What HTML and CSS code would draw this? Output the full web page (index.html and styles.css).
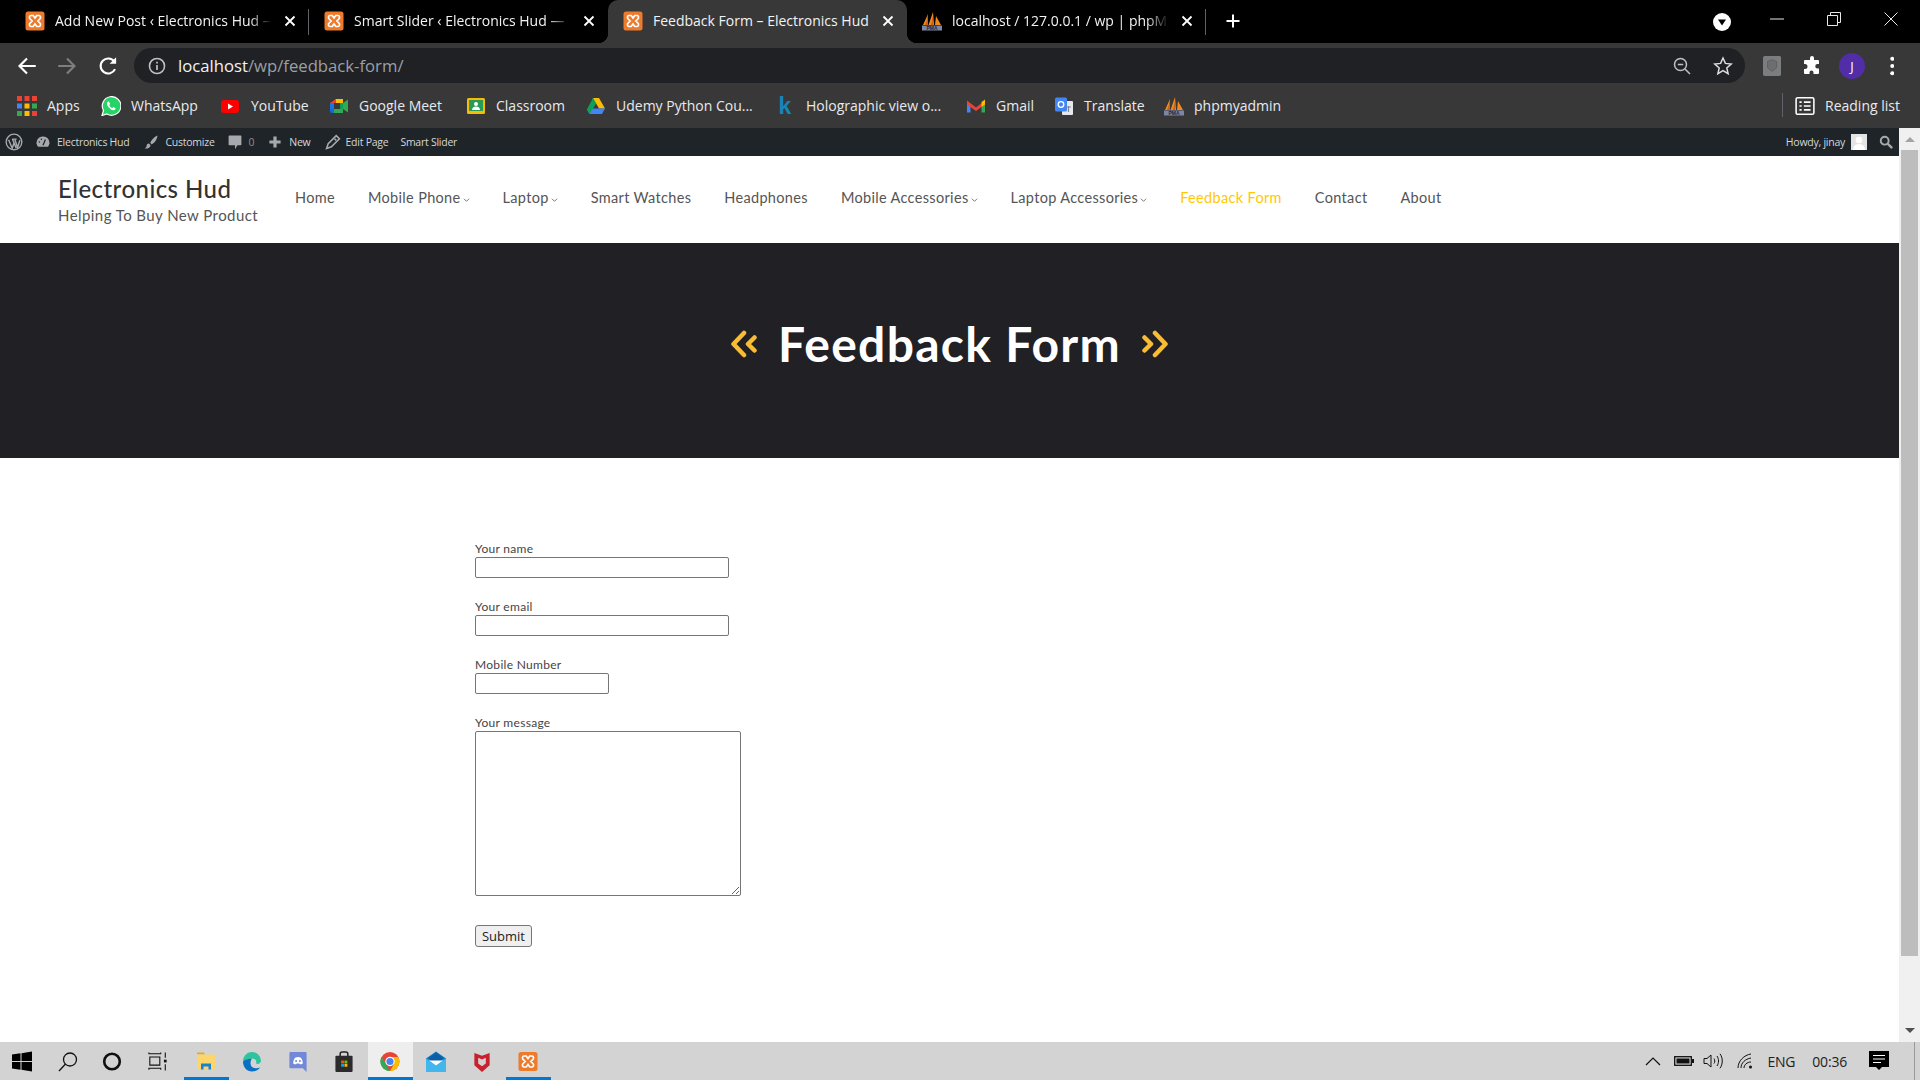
FILE: index.html
```html
<!DOCTYPE html>
<html lang="en">
<head>
  <meta charset="UTF-8">
  <title>Feedback Form – Electronics Hud</title>
  <link rel="stylesheet" href="styles.css">
</head>
<body>
  <svg class="defs" width="0" height="0">
    <symbol id="xampp" viewBox="0 0 20 20">
      <rect x="0.5" y="0.5" width="19" height="19" rx="2.5" fill="#ee7a2c"/>
      <path d="M6 4.500h2.200l1.800 2.600 1.800-2.600H14c1.600 0 2.200 2.600.7 3.600L12.800 10l1.900 1.900c1.500 1 .9 3.600-.7 3.600h-2.200L10 12.900l-1.800 2.600H6c-1.600 0-2.200-2.600-.7-3.600L7.200 10 5.300 8.100C3.800 7.100 4.400 4.500 6 4.500z" fill="none" stroke="#fff" stroke-width="1.700"/>
    </symbol>
    <symbol id="pma" viewBox="0 0 20 20">
      <path d="M1 14 6 3l-1 11zM6.500 14 11 1l1 13zM13 14l1-9 5 9z" fill="#f08a1d"/>
      <path d="M3 14 6 6v8zM9 14l2-9v9z" fill="#c9611a"/>
      <rect x="0" y="14.500" width="20" height="5" fill="#7c86a8"/>
    </symbol>
    <symbol id="caret" viewBox="0 0 8 6">
      <path d="M1 1.500 4 4.500l3-3" fill="none" stroke="#555" stroke-width="0.900"/>
    </symbol>
  </svg>

  <header class="tabstrip">
    <div class="tab tab-sep">
      <svg class="tab-icon"><use href="#xampp"/></svg>
      <span class="tab-title">Add New Post ‹ Electronics Hud —</span>
      <svg class="tab-close" viewBox="0 0 12 12"><path d="M1.500 1.500l9 9m0-9l-9 9"/></svg>
    </div>
    <div class="tab">
      <svg class="tab-icon"><use href="#xampp"/></svg>
      <span class="tab-title">Smart Slider ‹ Electronics Hud —</span>
      <svg class="tab-close" viewBox="0 0 12 12"><path d="M1.500 1.500l9 9m0-9l-9 9"/></svg>
    </div>
    <div class="tab active">
      <svg class="tab-icon"><use href="#xampp"/></svg>
      <span class="tab-title">Feedback Form – Electronics Hud</span>
      <svg class="tab-close" viewBox="0 0 12 12"><path d="M1.500 1.500l9 9m0-9l-9 9"/></svg>
    </div>
    <div class="tab tab-sep">
      <svg class="tab-icon" viewBox="0 0 20 20"><use href="#pma" width="20" height="20"/><text class="pma-label" x="10" y="19">PMA</text></svg>
      <span class="tab-title">localhost / 127.0.0.1 / wp | phpMy</span>
      <svg class="tab-close" viewBox="0 0 12 12"><path d="M1.500 1.500l9 9m0-9l-9 9"/></svg>
    </div>
    <svg class="new-tab" viewBox="0 0 16 16"><path d="M8 1.500v13M1.500 8h13"/></svg>
    <svg class="tab-search" viewBox="0 0 18 18"><circle cx="9" cy="9" r="9" fill="#fff"/><path d="M5 6.500h8L9 12.500z" fill="#000"/></svg>
    <div class="win-btn"><svg viewBox="0 0 14 14"><path d="M0 7h14"/></svg></div>
    <div class="win-btn"><svg viewBox="0 0 14 14"><path d="M.5 3.500h10v10H.5zM3.500 3.500V.5h10v10h-3"/></svg></div>
    <div class="win-btn"><svg viewBox="0 0 14 14"><path d="M.5.5l13 13m0-13l-13 13"/></svg></div>
  </header>

  <div class="toolbar">
    <div class="tool-btn"><svg viewBox="0 0 16 16"><path d="M15 8H2M8 2 2 8l6 6" fill="none" stroke="#fff" stroke-width="1.700"/></svg></div>
    <div class="tool-btn"><svg viewBox="0 0 16 16"><path d="M1 8h13M8 2l6 6-6 6" fill="none" stroke="#7c7e80" stroke-width="1.700"/></svg></div>
    <div class="tool-btn tool-reload"><svg viewBox="0 0 16 16"><path d="M13.600 10.500A6 6 0 1 1 13 4.500" fill="none" stroke="#fff" stroke-width="1.700"/><path d="M14.500 1v5.200H9.300z" fill="#fff"/></svg></div>
    <div class="address">
      <svg class="addr-info" viewBox="0 0 16 16"><circle cx="8" cy="8" r="6.700" fill="none" stroke="#bdc1c6" stroke-width="1.400"/><path d="M8 7v4.500M8 4.300v1.400" stroke="#bdc1c6" stroke-width="1.500"/></svg>
      <span class="addr-text"><b>localhost</b>/wp/feedback-form/</span>
      <svg class="addr-zoom" viewBox="0 0 18 18"><circle cx="7.500" cy="7.500" r="6" fill="none" stroke="#bdc1c6" stroke-width="1.500"/><path d="M12 12l5 5M4.800 7.500h5.400" stroke="#bdc1c6" stroke-width="1.500"/></svg>
      <svg class="addr-star" viewBox="0 0 20 20"><path d="M10 2l2.400 5.400 5.800.6-4.400 3.900 1.300 5.800-5.100-3-5.100 3 1.300-5.800L1.800 8l5.800-.6z" fill="none" stroke="#dadce0" stroke-width="1.500"/></svg>
    </div>
    <div class="tool-btn"><svg viewBox="0 0 20 22"><rect width="20" height="22" rx="2" fill="#7b7d7e"/><path d="M5 6l5-2 5 2v7l-5 4-5-4z" fill="#6c6e6f" stroke="#5d5f60"/></svg></div>
    <div class="tool-btn"><svg viewBox="0 0 20 20"><path d="M8 2a2 2 0 0 1 4 0v2h4a1 1 0 0 1 1 1v3h-1.500a2.200 2.200 0 0 0 0 4.500H17V17a1 1 0 0 1-1 1h-4.500v-1.500a2 2 0 0 0-4 0V18H3a1 1 0 0 1-1-1v-4h1a2.500 2.500 0 0 0 0-5H2V5a1 1 0 0 1 1-1h5z" fill="#fff"/></svg></div>
    <div class="tool-btn"><span class="avatar">J</span></div>
    <div class="tool-btn"><svg viewBox="0 0 4 18"><circle cx="2" cy="2.500" r="1.800" fill="#fff"/><circle cx="2" cy="9" r="1.800" fill="#fff"/><circle cx="2" cy="15.500" r="1.800" fill="#fff"/></svg></div>
  </div>

  <nav class="bookmarks">
    <a class="bm bm-apps"><svg viewBox="0 0 16 16"><path fill="#ea4335" d="M0 0h4v4H0zM6 0h4v4H6zM12 0h4v4h-4z"/><path fill="#4285f4" d="M0 6h4v4H0z"/><path fill="#fbbc05" d="M6 6h4v4H6z"/><path fill="#34a853" d="M12 6h4v4h-4z"/><path fill="#34a853" d="M0 12h4v4H0z"/><path fill="#fbbc05" d="M6 12h4v4H6z"/><path fill="#ea4335" d="M12 12h4v4h-4z"/></svg>Apps</a>
    <a class="bm bm-wa"><svg viewBox="0 0 20 20"><path d="M1 19.500l1.500-5A9.300 9.300 0 1 1 6 18z" fill="#25d366" stroke="#fff" stroke-width="1.200"/><path d="M7 5.500c-1.500 1-1.500 3 .5 5.500s4.500 4 6 3c1-.6 1.200-1.400 1-1.800l-2.200-1.200-1 1.100c-1-.3-2.600-1.800-3.100-3.200l.9-1L7.900 5.500z" fill="#fff"/></svg>WhatsApp</a>
    <a class="bm bm-yt"><svg viewBox="0 0 20 20"><rect x="1" y="4" width="18" height="13" rx="3" fill="#f00"/><path d="M8 7.500l5 3-5 3z" fill="#fff"/></svg>YouTube</a>
    <a class="bm bm-meet"><svg viewBox="0 0 20 20"><path d="M7 3h7v4H5V5z" fill="#fbbc05"/><path d="M1 7h4v6H1z" fill="#1a73e8"/><path d="M1 13h4v4H3a2 2 0 0 1-2-2z" fill="#1967d2"/><path d="M5 13h9v4H5z" fill="#34a853"/><path d="M7 3v4H1z" fill="#ea4335"/><path d="M14 7v6l5 3.500v-13z" fill="#34a853"/><path d="M11 7h3v6h-3z" fill="#0f9d58"/></svg>Google Meet</a>
    <a class="bm bm-class"><svg viewBox="0 0 20 20"><rect x="1" y="2" width="18" height="16" rx="1.500" fill="#f9bc05"/><rect x="3" y="4" width="14" height="11" fill="#2a9a55"/><circle cx="10" cy="8" r="2" fill="#fff"/><path d="M6 14c0-2.500 2-3.500 4-3.500s4 1 4 3.500z" fill="#fff"/></svg>Classroom</a>
    <a class="bm bm-drive"><svg viewBox="0 0 20 20"><path d="M7 2h6l-6.500 11.500-3.500-1z" fill="#0f9d58"/><path d="M7 2h6l6 10.500h-6z" fill="#fbbc05"/><path d="M6 12.500h13L16 18H3.500L1 13.500z" fill="#4285f4"/><path d="M7 2l3 5.500-6.500 10.500L.8 13.500z" fill="#0f9d58"/></svg>Udemy Python Cou...</a>
    <a class="bm bm-k"><span class="k-icon">k</span>Holographic view o...</a>
    <a class="bm bm-gmail"><svg viewBox="0 0 20 20"><path d="M1 5.500v11h3.500V9z" fill="#4285f4"/><path d="M19 5.500v11h-3.500V9z" fill="#34a853"/><path d="M1 4.500 10 11.500l9-7v4L10 15 1 8.500z" fill="#ea4335"/><path d="M15.500 6 19 3.500v5l-3.500 2.500z" fill="#fbbc05"/></svg>Gmail</a>
    <a class="bm bm-trans"><svg viewBox="0 0 20 20"><rect x="8" y="5" width="11" height="14" rx="1" fill="#e6e8ee"/><rect x="1" y="1.500" width="12" height="14" rx="1.500" fill="#4285f4"/><circle cx="7" cy="8.500" r="2.800" fill="none" stroke="#fff" stroke-width="1.300"/><path d="M12 11h5M14.500 10v6" stroke="#7d8694" stroke-width="1.200"/></svg>Translate</a>
    <a class="bm bm-pma"><svg viewBox="0 0 20 20"><use href="#pma" width="20" height="20"/><text class="pma-label" x="10" y="19">PMA</text></svg>phpmyadmin</a>
    <a class="bm bm-reading"><svg viewBox="0 0 18 18"><rect x="1" y="1.500" width="16" height="15" rx="1.500" fill="none" stroke="#fff" stroke-width="1.400"/><path d="M4 5.500h2M8 5.500h6M4 9h2M8 9h6M4 12.500h2M8 12.500h6" stroke="#fff" stroke-width="1.400"/></svg>Reading list</a>
  </nav>

  <div class="viewport">
    <div class="page">
      <div class="adminbar">
        <svg class="ab-wp" viewBox="0 0 20 20"><circle cx="10" cy="10" r="8.700" fill="none" stroke="#a7aaad" stroke-width="1.500"/><path d="M4 7.500 8 17l2-6-1.800-4.500M8 6.800h5M11 7.500l3 8.500 2.500-8M10 11l2.500 6" fill="none" stroke="#a7aaad" stroke-width="1.600"/></svg>
        <svg class="ab-ic ab-dash" viewBox="0 0 20 20"><path d="M10 3a8 8 0 0 0-7 12l1 1h12l1-1a8 8 0 0 0-7-12z" fill="#a7aaad"/><path d="M10 14l3-7" stroke="#1f2429" stroke-width="1.600"/><circle cx="5.500" cy="10" r="1" fill="#1f2429"/><circle cx="8" cy="6.500" r="1" fill="#1f2429"/></svg>
        <span class="ab-item ab-site">Electronics Hud</span>
        <svg class="ab-ic ab-brush" viewBox="0 0 20 20"><path d="M18 2c-3 1-7 5-9 9l2 2c4-2 7-7 7-11zM7.500 12c-2 0-3 1.500-3 3S3 17.500 2 18c3 .5 7 0 7.500-4z" fill="#a7aaad"/></svg>
        <span class="ab-item ab-custom">Customize</span>
        <svg class="ab-ic ab-comment" viewBox="0 0 20 20"><path d="M3 2h14a1 1 0 0 1 1 1v10a1 1 0 0 1-1 1h-4l-3 5v-5H3a1 1 0 0 1-1-1V3a1 1 0 0 1 1-1z" fill="#a7aaad"/></svg>
        <span class="ab-item ab-count">0</span>
        <svg class="ab-ic ab-plus" viewBox="0 0 20 20"><path d="M8 3h4v5h5v4h-5v5H8v-5H3V8h5z" fill="#a7aaad"/></svg>
        <span class="ab-item ab-new">New</span>
        <svg class="ab-ic ab-pencil" viewBox="0 0 20 20"><path d="M14 2l4 4L8 16l-6 2 2-6zM12 6l2 2" fill="none" stroke="#a7aaad" stroke-width="2"/></svg>
        <span class="ab-item ab-edit">Edit Page</span>
        <span class="ab-item ab-slider">Smart Slider</span>
        <span class="ab-item ab-howdy">Howdy, jinay</span>
        <svg class="ab-avatar" viewBox="0 0 16 16"><rect width="16" height="16" fill="#e4e4e4"/><circle cx="8" cy="6" r="3.300" fill="#fff"/><path d="M2 16c0-4 3-6 6-6s6 2 6 6z" fill="#fff"/></svg>
        <svg class="ab-search" viewBox="0 0 16 16"><circle cx="6.500" cy="6.500" r="4.500" fill="none" stroke="#a7aaad" stroke-width="2.200"/><path d="M10 10l5 5" stroke="#a7aaad" stroke-width="2.800"/></svg>
      </div>

      <div class="site-head">
        <div class="brand">
          <div class="brand-name">Electronics Hud</div>
          <div class="brand-tag">Helping To Buy New Product</div>
        </div>
        <ul class="menu">
          <li>Home</li>
          <li>Mobile Phone<svg class="menu-caret"><use href="#caret"/></svg></li>
          <li>Laptop<svg class="menu-caret"><use href="#caret"/></svg></li>
          <li>Smart Watches</li>
          <li>Headphones</li>
          <li>Mobile Accessories<svg class="menu-caret"><use href="#caret"/></svg></li>
          <li>Laptop Accessories<svg class="menu-caret"><use href="#caret"/></svg></li>
          <li class="current">Feedback Form</li>
          <li>Contact</li>
          <li>About</li>
        </ul>
      </div>

      <section class="hero">
        <svg class="hero-chev" viewBox="0 0 26 28"><path d="M13 3 2.500 14 13 25M23.500 7.500 17 14l6.500 6.500" fill="none" stroke="#f9bc35" stroke-width="4.500" stroke-linecap="round" stroke-linejoin="round"/></svg>
        <h1>Feedback Form</h1>
        <svg class="hero-chev" viewBox="0 0 26 28"><path d="M13 3l10.500 11L13 25M2.500 7.500 9 14l-6.500 6.500" fill="none" stroke="#f9bc35" stroke-width="4.500" stroke-linecap="round" stroke-linejoin="round"/></svg>
      </section>

      <form class="feedback">
        <label class="field">Your name<input type="text" class="input-wide"></label>
        <label class="field">Your email<input type="email" class="input-wide"></label>
        <label class="field">Mobile Number<input type="tel" class="input-tel"></label>
        <label class="field field-msg">Your message<textarea></textarea></label>
        <button type="button" class="submit">Submit</button>
      </form>
    </div>

    <aside class="scrollbar">
      <span class="arrow-up"></span>
      <span class="thumb"></span>
      <span class="arrow-down"></span>
    </aside>
  </div>

  <footer class="taskbar">
    <div class="task"><svg viewBox="0 0 20 20"><path d="M0 3l8.500-1.200V9.500H0zM9.500 1.700 20 0v9.500H9.500zM0 10.500h8.500v7.700L0 17zM9.500 10.500H20V20L9.500 18.300z" fill="#000"/></svg></div>
    <div class="task"><svg viewBox="0 0 20 20"><circle cx="12" cy="8" r="6.500" fill="none" stroke="#111" stroke-width="1.300"/><path d="M7.500 12.500 1 19.500" stroke="#111" stroke-width="1.300"/></svg></div>
    <div class="task task-cortana"><svg viewBox="0 0 20 20"><circle cx="10" cy="10" r="7.800" fill="none" stroke="#111" stroke-width="2.600"/></svg></div>
    <div class="task task-view"><svg viewBox="0 0 22 22"><path d="M1 1v1.500h13V1M2 6h11v9H2zM1 20v-1.500h13V20M19 1v6M19 14v7" fill="none" stroke="#111" stroke-width="1.200"/><rect x="17.500" y="9" width="3" height="3" fill="#111"/></svg></div>
    <div class="task running"><svg viewBox="0 0 20 20"><path d="M1 1h7l1 2H1z" fill="#e9a825"/><path d="M1 3h18v15H1z" fill="#fbd66c"/><path d="M5 12h10v6h-2.500v-3h-5v3H5z" fill="#1c80d0"/></svg></div>
    <div class="task"><svg viewBox="0 0 20 20"><path d="M1 10a9 9 0 0 1 18-1c0 3-3 4-5 3 1-3-1-5-4-5-4 0-7 3-9 3z" fill="#2fc4a0"/><path d="M1 10c0 6 4 10 9 10 4 0 7-2 8-4-3 1.500-8 1-9-2-1-2-.5-5 1-7-5 .5-8 2-9 3z" fill="#0b6fc4"/></svg></div>
    <div class="task"><svg viewBox="0 0 20 22"><path d="M2 1h16a1 1 0 0 1 1 1v20l-4-4H2a1 1 0 0 1-1-1V2a1 1 0 0 1 1-1z" fill="#7289da"/><path d="M5 13c0-3 1-5 2-6 2-.8 4-.8 6 0 1 1 2 3 2 6-1 1-2 1-3 1l-.6-1h-2.800l-.6 1c-1 0-2 0-3-1z" fill="#fff"/><circle cx="8" cy="10.500" r="1.100" fill="#7289da"/><circle cx="12" cy="10.500" r="1.100" fill="#7289da"/></svg></div>
    <div class="task"><svg viewBox="0 0 20 22"><path d="M6 6V3a2 2 0 0 1 2-2h4a2 2 0 0 1 2 2v3" fill="none" stroke="#222" stroke-width="1.600"/><rect x="1" y="5" width="18" height="17" rx="1" fill="#2b2b2b"/><path fill="#f25022" d="M7 10h3v3H7z"/><path fill="#7fba00" d="M10.500 10h3v3h-3z"/><path fill="#00a4ef" d="M7 13.500h3v3H7z"/><path fill="#ffb900" d="M10.500 13.500h3v3h-3z"/></svg></div>
    <div class="task running open"><svg viewBox="0 0 20 20"><circle cx="10" cy="10" r="9.500" fill="#ea4335"/><path d="M10 19.500A9.500 9.500 0 0 1 1.700 5.200L6 12.500z" fill="#34a853"/><path d="M10 5.500h8.300A9.500 9.500 0 0 1 10 19.500l4-7z" fill="#fbbc05"/><circle cx="10" cy="10" r="4.700" fill="#fff"/><circle cx="10" cy="10" r="3.600" fill="#4285f4"/></svg></div>
    <div class="task"><svg viewBox="0 0 20 20"><path d="M10 0 0 7v13h20V7z" fill="#0f7ac6"/><path d="M0 7h20L10 14z" fill="#1f99e0"/><path d="M0 7l10 7 10-7v13H0z" fill="#41b7ee"/><path d="M2 7 10 1l8 6-8 5.500z" fill="#0a5fa6"/><path d="M3 9h14l-7 5z" fill="#fff"/></svg></div>
    <div class="task"><svg viewBox="0 0 18 22"><path d="M1 2l8 3 8-3v13l-8 7-8-7z" fill="#c8202d"/><path d="M5 7l4 2 4-2v6l-4 3-4-3z" fill="#d2d2d2"/></svg></div>
    <div class="task running"><svg><use href="#xampp"/></svg></div>

    <div class="tray">
      <svg class="tray-chev" viewBox="0 0 16 9"><path d="M1 8l7-7 7 7" fill="none" stroke="#111" stroke-width="1.200"/></svg>
      <svg class="tray-batt" viewBox="0 0 20 12"><rect x=".7" y="1.700" width="16.600" height="8.600" fill="none" stroke="#111" stroke-width="1.300"/><rect x="2.500" y="3.500" width="13" height="5" fill="#111"/><rect x="18" y="4" width="2" height="4" fill="#111"/></svg>
      <svg class="tray-vol" viewBox="0 0 20 16"><path d="M1 5.500h3L8 2v12l-4-3.500H1zM11 5.500c1 1.500 1 3.500 0 5M14 3c2 3 2 7 0 10M17 .8c3 4 3 10.400 0 14.400" fill="none" stroke="#111" stroke-width="1"/></svg>
      <svg class="tray-wifi" viewBox="0 0 16 16"><path d="M1 15C1 8 7 2 14 1M4 15c0-5 4-9 10-10M7 15c0-3 3-6 7-6" fill="none" stroke="#111" stroke-width="1"/><circle cx="13.500" cy="14" r="1.500" fill="#111"/></svg>
      <span class="tray-lang">ENG</span>
      <span class="tray-time">00:36</span>
      <svg class="tray-note" viewBox="0 0 20 20"><path d="M0 0h20v16h-7l-3 3-3-3H0z" fill="#000"/><path d="M4 4.500h12M4 8h12M4 11.500h8" stroke="#fff" stroke-width="1.100"/></svg>
      <span class="tray-desk"></span>
    </div>
  </footer>
</body>
</html>
```

FILE: styles.css
```css
/*reset*/
* {
    box-sizing: border-box;
}

html, body {
    margin: 0;
    padding: 0;
    height: 100%;
    overflow: hidden;
}

body {
    display: flex;
    flex-direction: column;
    background: #fff;
    font-family: "Open Sans", "Liberation Sans", sans-serif;
}

ul {
    margin: 0;
    padding: 0;
    list-style: none;
}

.defs {
    position: absolute;
}

.pma-label {
    fill: #23263a;
    font: 700 5px "Liberation Sans", sans-serif;
    text-anchor: middle;
}

/*tab strip*/
.tabstrip {
    display: flex;
    align-items: center;
    flex: none;
    height: 43px;
    padding: 0 1px 0 10px;
    background: #000;
}

.tab {
    position: relative;
    display: flex;
    align-items: center;
    flex: none;
    width: 299px;
    height: 43px;
    padding: 0 10px 2px 15px;
    color: #f1f3f4;
    font-size: 14px;
}

.tab.active {
    background: #383838;
    border-radius: 10px 10px 0 0;
}

.tab.active::before,
.tab.active::after {
    content: "";
    position: absolute;
    bottom: 0;
    width: 10px;
    height: 10px;
}

.tab.active::before {
    left: -10px;
    background: radial-gradient(circle at 0 0, #000 10px, #383838 10.5px);
}

.tab.active::after {
    right: -10px;
    background: radial-gradient(circle at 100% 0, #000 10px, #383838 10.5px);
}

.tab-sep::after {
    content: "";
    position: absolute;
    top: 9px;
    right: 0;
    width: 1px;
    height: 26px;
    background: #5f6368;
}

.tab-icon {
    flex: none;
    width: 20px;
    height: 20px;
    margin-right: 10px;
}

.tab-title {
    flex: 1;
    min-width: 0;
    white-space: nowrap;
    -webkit-mask-image: linear-gradient(90deg, #000 88%, transparent 98%);
    mask-image: linear-gradient(90deg, #000 88%, transparent 98%);
}

.tab.active .tab-title {
    -webkit-mask-image: none;
    mask-image: none;
}

.tab-close {
    flex: none;
    width: 12px;
    height: 12px;
    margin: 0 3px 0 8px;
    fill: none;
    stroke: #fff;
    stroke-width: 1.800;
}

.new-tab {
    flex: none;
    width: 16px;
    height: 16px;
    margin-left: 19px;
    margin-bottom: 1px;
    fill: none;
    stroke: #fff;
    stroke-width: 2;
}

.tab-search {
    flex: none;
    width: 18px;
    height: 18px;
    margin-left: auto;
    margin-right: 17px;
}

.win-btn {
    display: flex;
    align-items: center;
    justify-content: center;
    flex: none;
    width: 57px;
    height: 43px;
    padding-bottom: 6px;
}

.win-btn svg {
    width: 14px;
    height: 14px;
    fill: none;
    stroke: #e8e8e8;
    stroke-width: 1;
}

/*toolbar*/
.toolbar {
    display: flex;
    align-items: center;
    flex: none;
    height: 40px;
    padding: 5px 8px 0 7px;
    background: #383838;
}

.tool-btn {
    display: flex;
    align-items: center;
    justify-content: center;
    flex: none;
    width: 40px;
    height: 35px;
}

.tool-reload {
    padding-left: 2px;
}

.tool-btn svg {
    max-width: 20px;
    height: 20px;
}

.avatar {
    display: flex;
    align-items: center;
    justify-content: center;
    width: 26px;
    height: 26px;
    border-radius: 50%;
    background: #512da8;
    color: #fff;
    font-size: 13px;
}

.address {
    display: flex;
    align-items: center;
    flex: 1;
    height: 35px;
    margin: 0 7px;
    padding: 0 12px 0 14px;
    background: #202124;
    border-radius: 18px;
}

.addr-info {
    flex: none;
    width: 18px;
    height: 18px;
    margin-right: 12px;
}

.addr-text {
    flex: 1;
    color: #9aa0a6;
    font-size: 16.7px;
}

.addr-text b {
    color: #f1f3f4;
    font-weight: 400;
}

.addr-zoom {
    flex: none;
    width: 18px;
    height: 18px;
    margin-right: 22px;
}

.addr-star {
    flex: none;
    width: 20px;
    height: 20px;
}

/*bookmarks*/
.bookmarks {
    display: flex;
    align-items: center;
    flex: none;
    height: 45px;
    padding-left: 17px;
    background: #383838;
    color: #e8eaed;
    font-size: 14px;
    white-space: nowrap;
}

.bm {
    display: flex;
    align-items: center;
    flex: none;
    gap: 10px;
}

.bm svg {
    flex: none;
    width: 20px;
    height: 20px;
}

.bm-apps { width: 84px; }
.bm-wa { width: 119px; }
.bm-yt { width: 109px; gap: 11px; }
.bm-meet { width: 137px; }
.bm-class { width: 120px; }
.bm-drive { width: 189px; }
.bm-k { width: 191px; gap: 11px; }
.bm-gmail { width: 88px; }
.bm-trans { width: 110px; }

.k-icon {
    width: 20px;
    color: #1487b8;
    font: 700 23px/20px "Liberation Sans", sans-serif;
    text-align: center;
}

.bm-reading {
    position: relative;
    margin-left: auto;
    width: 125px;
}

.bm-reading::before {
    content: "";
    position: absolute;
    left: -13px;
    top: -3px;
    width: 1px;
    height: 24px;
    background: #5f6368;
}

/*page*/
.viewport {
    display: flex;
    flex: 1;
    min-height: 0;
}

.page {
    flex: 1;
    min-width: 0;
    overflow: hidden;
}

.adminbar {
    display: flex;
    align-items: center;
    height: 28px;
    padding-left: 5px;
    background: #1f2429;
    color: #d5d7d9;
    font-size: 10.5px;
    letter-spacing: -.25px;
    white-space: nowrap;
}

.ab-wp {
    flex: none;
    width: 18px;
    height: 18px;
    margin-right: 12px;
}

.ab-ic {
    flex: none;
    width: 16px;
    height: 16px;
    margin-right: 6px;
}

.ab-site { margin-right: 14px; }
.ab-custom { margin-right: 12px; }
.ab-count { margin-right: 13px; color: #8b8e90; }
.ab-new { margin-right: 14px; }
.ab-pencil { margin-right: 5px; }
.ab-edit { margin-right: 12px; }

.ab-howdy {
    margin-left: auto;
    margin-right: 6px;
}

.ab-avatar {
    flex: none;
    width: 16px;
    height: 16px;
    margin-right: 12px;
}

.ab-search {
    flex: none;
    width: 14px;
    height: 14px;
    margin-right: 6px;
}

.site-head {
    display: flex;
    height: 87px;
    padding-left: 58px;
    color: #555;
}

.brand {
    padding-top: 18px;
    width: 237px;
    white-space: nowrap;
}

.brand-name {
    color: #333;
    font: 500 24px/29px Lato, sans-serif;
    letter-spacing: .45px;
}

.brand-tag {
    margin-top: 2px;
    font: 400 15px/20px Lato, sans-serif;
    letter-spacing: .43px;
}

.menu {
    display: flex;
    align-items: flex-start;
    gap: 33px;
    padding-top: 32px;
    font: 400 14.5px/20px Lato, sans-serif;
    letter-spacing: .33px;
    white-space: nowrap;
}

.menu-caret {
    width: 7px;
    height: 6px;
    margin-left: 2px;
}

.menu .current {
    color: #ffc800;
}

.hero {
    display: flex;
    align-items: center;
    justify-content: center;
    gap: 21px;
    height: 215px;
    padding-bottom: 13px;
    background: #202025;
}

.hero h1 {
    margin: 0;
    color: #fff;
    font: 700 48px/60px Lato, sans-serif;
    letter-spacing: 1.3px;
}

.hero-chev {
    flex: none;
    width: 26px;
    height: 28px;
}

/*form*/
.feedback {
    padding: 83px 0 0 475px;
}

.field {
    display: block;
    margin-bottom: 21px;
    color: #444;
    font: 400 12px/16px Lato, sans-serif;
    letter-spacing: .3px;
}

.field input,
.field textarea {
    display: block;
    margin: 0;
    padding: 1px 2px;
    background: #fff;
    border: 1px solid #767676;
    border-radius: 2px;
}

.field input {
    height: 21px;
}

.input-wide {
    width: 254px;
}

.input-tel {
    width: 134px;
}

.field textarea {
    width: 266px;
    height: 165px;
}

.field-msg {
    margin-bottom: 29px;
}

.submit {
    display: block;
    width: 57px;
    height: 22px;
    padding: 0;
    background: #efefef;
    border: 1px solid #767676;
    border-radius: 3px;
    color: #222;
    font: 400 13px/18px "Open Sans", sans-serif;
}

/*scrollbar*/
.scrollbar {
    display: flex;
    flex-direction: column;
    align-items: center;
    flex: none;
    width: 21px;
    padding-top: 9px;
    background: #f0f0f0;
}

.arrow-up,
.arrow-down {
    flex: none;
    width: 0;
    height: 0;
    border-left: 5px solid transparent;
    border-right: 5px solid transparent;
}

.arrow-up {
    border-bottom: 5px solid #a3a3a3;
}

.thumb {
    flex: none;
    width: 17px;
    height: 806px;
    margin: 8px 0 72px;
    background: #bdbdbd;
}

.arrow-down {
    border-top: 5px solid #505050;
}

/*taskbar*/
.taskbar {
    display: flex;
    align-items: stretch;
    gap: 1px;
    flex: none;
    height: 38px;
    background: #d3d3d3;
}

.task {
    display: flex;
    align-items: center;
    justify-content: center;
    flex: none;
    width: 45px;
    padding-right: 2px;
}

.task-cortana svg,
.task-view svg {
    margin-right: 3px;
}

.task svg {
    width: 20px;
    height: 21px;
}

.task.running {
    border-bottom: 3px solid #0078d7;
    padding-top: 3px;
}

.task.open {
    background: #eee;
}

.tray {
    display: flex;
    align-items: center;
    flex: none;
    margin-left: auto;
    height: 100%;
    color: #222;
    font-size: 14px;
    letter-spacing: -.2px;
}

.tray-chev { width: 16px; height: 9px; }
.tray-batt { width: 20px; height: 12px; margin-left: 13px; }
.tray-vol { width: 20px; height: 16px; margin-left: 9px; }
.tray-wifi { width: 16px; height: 16px; margin-left: 14px; }
.tray-lang { margin-left: 14px; }
.tray-time { margin-left: 17px; }
.tray-note { width: 20px; height: 20px; margin-left: 22px; }

.tray-desk {
    width: 1px;
    height: 100%;
    margin-left: 25px;
    margin-right: 5px;
    background: #999;
}
```
